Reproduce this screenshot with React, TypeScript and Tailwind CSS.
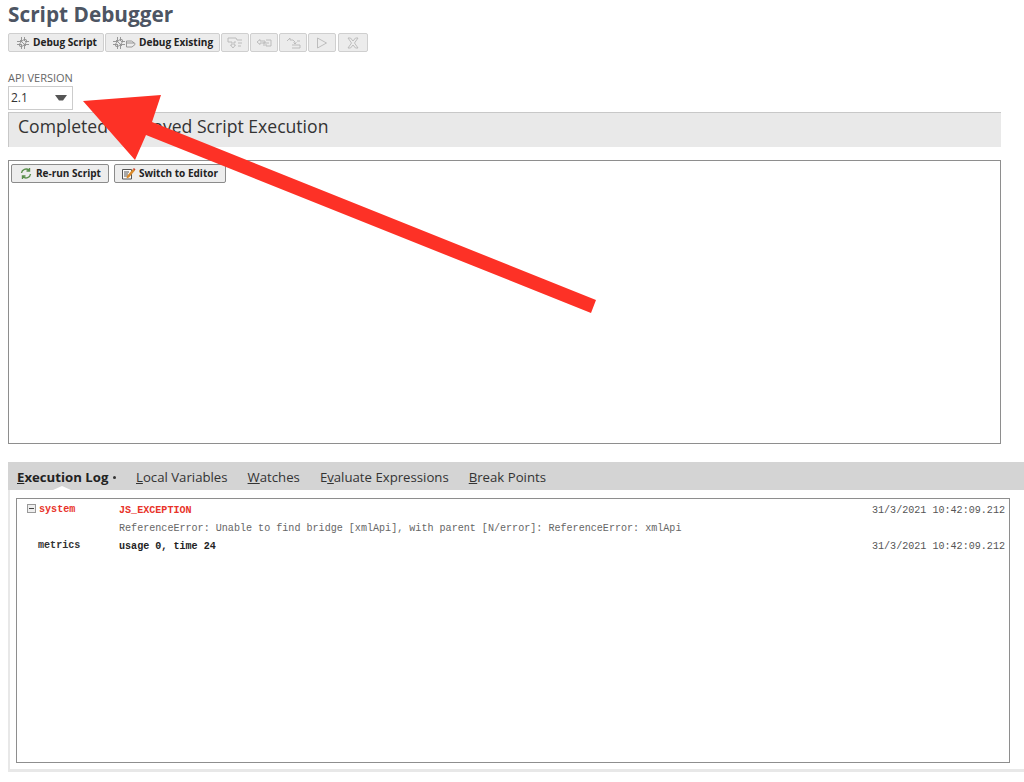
import React from "react";

const sans = "font-['Open_Sans','Noto_Sans',sans-serif]";

function Bug({ color = "#8f8f8f" }: { color?: string }) {
  return (
    <svg width="14" height="14" viewBox="0 0 14 14" fill="none" stroke={color} strokeWidth="0.9">
      <ellipse cx="7" cy="7" rx="4.6" ry="2.2" transform="rotate(-45 7 7)" />
      <path d="M1 5.5h4M1 8.5h5M5.5 1v4M8.5 13V8M9 5.5h4M8 8.5h5M8.5 1v4M5.5 13V9M4 4l6 6" />
    </svg>
  );
}

function ToolIcon({ d }: { d: string }) {
  return (
    <svg width="18" height="14" viewBox="0 0 18 14" fill="none" stroke="#b8b8b8" strokeWidth="0.9">
      <path d={d} />
    </svg>
  );
}

const toolIcons = [
  "M2 2h8l1 2h5M2 2v4h4v3h-1.500l2.500 3 2.500-3H8V6h2M12 7h4M12 10h3",
  "M2 6l3-2.500V5h5v2H5v1.500zM11 4h5v6h-5M8 7h6M8 9h4",
  "M3 5l3-3v2h3l2 2v2M11 8l-1.500-1.500M11 8l1.500-1.500M8 9h8v3H8M13 5h3",
  "M4.500 2l9 5-9 5z",
  "M4 2h2.500L9 5l2.500-3H14l-3.500 5L14 12h-2.500L9 9l-2.500 3H4l3.500-5z",
];

function ToolButton({ children, className = "" }: { children: React.ReactNode; className?: string }) {
  return (
    <div className={`flex h-[19px] items-center rounded-[2px] border border-[#cfcfcf] bg-[#ececec] ${className}`}>
      {children}
    </div>
  );
}

function ActionButton({ icon, label, className }: { icon: React.ReactNode; label: string; className: string }) {
  return (
    <div className={`flex h-[19px] items-center gap-[3px] rounded-[2px] border border-[#8b8b8b] bg-[#ededed] text-[10px] font-bold text-[#222222] ${className}`}>
      {icon}
      <span>{label}</span>
    </div>
  );
}

function Tab({ first, rest, active, className = "" }: { first: string; rest: string; active?: boolean; className?: string }) {
  return (
    <span className={`${active ? "font-bold text-[#222222]" : "text-[#333333]"} ${className}`}>
      <span className="underline">{first}</span>
      {rest}
    </span>
  );
}

export default function App() {
  return (
    <div className={`${sans} relative h-[782px] w-[1024px] overflow-hidden bg-white`}>
      <div className="flex flex-col pl-2 pt-[2px]">
        <h1 className="h-[26px] text-[20.8px] font-bold leading-[25px] text-[#4d5563]">Script Debugger</h1>

        <div className="mt-[5px] flex gap-[1px]">
          <ToolButton className="w-[96px] gap-[3px] pl-[7px] text-[10.1px] font-bold text-[#222222]">
            <Bug />
            <span>Debug Script</span>
          </ToolButton>
          <ToolButton className="w-[115px] gap-[3px] pl-[6px] text-[10.1px] font-bold text-[#222222]">
            <span className="flex">
              <Bug />
              <svg width="10" height="14" viewBox="0 0 10 14" fill="none" stroke="#8f8f8f" strokeWidth="0.9">
                <path d="M0.500 5h5l3.500 2.500v1L6 11H0.500zM1 7h7" />
              </svg>
            </span>
            <span>Debug Existing</span>
          </ToolButton>
          {toolIcons.map((d, i) => (
            <ToolButton key={d} className={`${i === 4 ? "ml-[1px] w-[30px]" : "w-[28px]"} justify-center`}>
              <ToolIcon d={d} />
            </ToolButton>
          ))}
        </div>

        <div className="mt-[19px] h-[14px] text-[11px] leading-[14px] text-[#666666]">API VERSION</div>

        <div className="mt-[1px] flex h-[24px] w-[65px] items-center justify-between border border-[#cccccc] pl-[2px] pr-[4px] text-[12px] text-[#333333]">
          <span>2.1</span>
          <svg width="12" height="6" viewBox="0 0 12 6" className="mr-[1px]">
            <path d="M0 0h12L8 5.500H4z" fill="#555555" />
          </svg>
        </div>

        <div className="mt-[2px] flex h-[35px] w-[993px] items-center border-l border-t border-[#c8c8c8] bg-[#e9e9e9] pb-[8px] pl-[9px] text-[17.6px] text-[#333333]">
          Completed Approved Script Execution
        </div>

        <div className="mt-[13px] h-[284px] w-[993px] border border-[#8e8e8e] pl-[2px] pt-[3px]">
          <div className="flex gap-[5px]">
            <ActionButton
              className="w-[98px] pl-[7px]"
              label="Re-run Script"
              icon={
                <svg width="14" height="13" viewBox="0 0 14 13" fill="none" stroke="#5a8f4c" strokeWidth="1.400">
                  <path d="M2.500 6a4.500 4.500 0 0 1 7.500-2.800M11.500 7a4.500 4.500 0 0 1-7.500 2.800M10.500 1v3h-3M3.500 12V9h3" />
                </svg>
              }
            />
            <ActionButton
              className="w-[112px] pl-[6px]"
              label="Switch to Editor"
              icon={
                <svg width="15" height="13" viewBox="0 0 15 13" fill="none">
                  <path d="M1.500 2.500h9V12h-9z" fill="#fafafa" stroke="#555555" />
                  <path d="M3 5h5M3 7h4M3 9h5" stroke="#555555" />
                  <path d="M6 9l6-7 2 1.500-6 7-2.500 1z" fill="#d98a2b" />
                  <path d="M12 2l1-1 1.500 1.500-1 1z" fill="#cc3a2a" />
                </svg>
              }
            />
          </div>
        </div>

        <div className="mt-[18px] w-[1016px] border-b-[3px] border-l-[2px] border-[#e8e8e8] pb-[6px]">
          <div className="relative -ml-[2px] flex h-[28px] items-center gap-[20px] bg-[#d4d4d4] pl-[9px] pt-[3px] text-[13.2px]">
            <Tab first="E" rest="xecution Log" active className="-mr-[1px] w-[100px] whitespace-nowrap" />
            <Tab first="L" rest="ocal Variables" />
            <Tab first="W" rest="atches" />
            <span className="text-[#333333]">
              E<span className="underline">v</span>aluate Expressions
            </span>
            <Tab first="B" rest="reak Points" />
            <span className="absolute left-[105px] top-[14px] size-[3px] rounded-full bg-[#333333]" />
            <span className="absolute bottom-0 left-[45px] h-0 w-0 border-x-[9px] border-b-[4px] border-x-transparent border-b-white" />
          </div>

          <div className="ml-[6px] mt-[8px] h-[265px] w-[994px] border border-[#8e8e8e] font-['Liberation_Mono',monospace] text-[10.08px] leading-[12px]">
            <div className="flex pl-[10px] pr-[4px] pt-[5px]">
              <div className="flex w-[92px] items-start font-bold text-[#e8332a]">
                <span className="mr-[3px] flex size-[9px] items-center justify-center border border-[#999999] bg-[#eeeeee]">
                  <span className="h-[1px] w-[5px] bg-[#444444]" />
                </span>
                system
              </div>
              <div className="pt-[1px] font-bold text-[#e8332a]">JS_EXCEPTION</div>
              <div className="ml-auto pt-[1px] text-[#555555]">31/3/2021 10:42:09.212</div>
            </div>
            <div className="pl-[102px] pt-[6px] text-[#666666]">
              ReferenceError: Unable to find bridge [xmlApi], with parent [N/error]: ReferenceError: xmlApi
            </div>
            <div className="flex pl-[21px] pr-[4px] pt-[5px]">
              <div className="w-[81px] font-bold text-[#333333]">metrics</div>
              <div className="pt-[1px] font-bold text-[#222222]">usage 0, time 24</div>
              <div className="ml-auto pt-[1px] text-[#555555]">31/3/2021 10:42:09.212</div>
            </div>
          </div>
        </div>
      </div>

      <svg className="pointer-events-none absolute left-0 top-0" width="1024" height="782" viewBox="0 0 1024 782">
        <polygon points="83,101 161,95 152,122 596,300 591,313 146,135 135,160" fill="#fd3126" />
      </svg>
    </div>
  );
}
